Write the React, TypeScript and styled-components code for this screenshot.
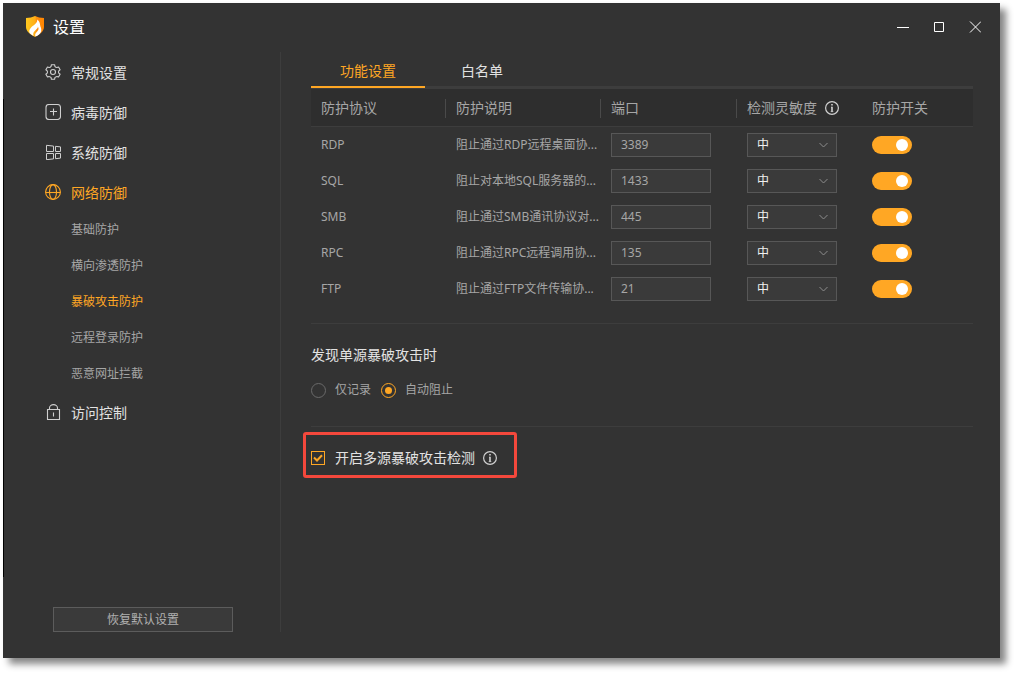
import React from "react";
import styled, { createGlobalStyle } from "styled-components";

const accent = "#ffa724";

const GlobalStyle = createGlobalStyle`
  *, *::before, *::after { box-sizing: border-box; }
  body {
    margin: 0;
    background: #fff;
    font-family: "Noto Sans", "Noto Sans CJK SC", sans-serif;
    font-size: 12px;
    line-height: 20px;
    color: #a6a6a6;
  }
  button, input, select { font: inherit; color: inherit; margin: 0; }
`;

const Frame = styled.div`
  display: flex;
  min-height: 100vh;
  padding: 3px 16px 16px 3px;
`;

const Window = styled.div`
  flex: 1;
  min-width: 0;
  display: flex;
  flex-direction: column;
  padding-bottom: 26px;
  background: #333;
  box-shadow: 6px 6px 7px rgba(0, 0, 0, 0.48);
  position: relative;

  &::before {
    content: "";
    position: absolute;
    left: 0;
    top: 96px;
    bottom: 81px;
    width: 1px;
    background: #000;
  }
`;

const TitleBar = styled.header`
  display: flex;
  align-items: center;
  height: 49px;
  padding: 0 17px 2px 23px;
`;

const Title = styled.h1`
  flex: 1;
  margin: 0 0 0 9px;
  font-size: 16px;
  font-weight: 400;
  line-height: 24px;
  color: #fff;
`;

const WindowButtons = styled.div`
  display: flex;
  gap: 20px;
`;

const WindowButton = styled.button`
  display: flex;
  align-items: center;
  justify-content: center;
  width: 16px;
  height: 16px;
  padding: 0;
  border: 0;
  background: none;
  color: #fff;
`;

const Body = styled.div`
  flex: 1;
  display: flex;
`;

const Sidebar = styled.aside`
  flex: none;
  width: 278px;
  display: flex;
  flex-direction: column;
  justify-content: space-between;
  padding-left: 42px;
  border-right: 1px solid #3d3d3d;
`;

const NavList = styled.ul`
  list-style: none;
  margin: 0;
  padding: 0;
`;

const NavLink = styled.a<{ $active?: boolean }>`
  display: flex;
  align-items: center;
  gap: 10px;
  height: 40px;
  font-size: 14px;
  color: ${(p) => (p.$active ? accent : "#cfcfcf")};
  text-decoration: none;
`;

const NavText = styled.span<{ $active?: boolean }>`
  padding-top: 2px;
  color: ${(p) => (p.$active ? accent : "#e2e2e2")};
`;

const SubLink = styled.a<{ $active?: boolean }>`
  display: flex;
  align-items: center;
  height: 36px;
  padding-left: 26px;
  color: ${(p) => (p.$active ? accent : "#a6a6a6")};
  text-decoration: none;
`;

const ResetButton = styled.button`
  width: 180px;
  height: 25px;
  margin-left: 8px;
  padding: 0;
  border: 1px solid #5c5c5c;
  background: #3a3a3a;
  color: #b0b0b0;
`;

const Main = styled.main`
  flex: 1;
  min-width: 0;
  padding: 0 27px 0 30px;
`;

const Tabs = styled.div`
  display: flex;
  height: 37px;
  border-bottom: 3px solid #3d3d3d;
`;

const Tab = styled.button<{ $active?: boolean }>`
  width: 114px;
  height: 36px;
  padding: 4px 0 0;
  border: 0;
  border-bottom: 2px solid ${(p) => (p.$active ? accent : "transparent")};
  background: none;
  font-size: 14px;
  color: ${(p) => (p.$active ? accent : "#e2e2e2")};
`;

const Table = styled.table`
  width: 100%;
  table-layout: fixed;
  border-collapse: collapse;
`;

const Col = styled.col<{ $width?: number }>`
  width: ${(p) => (p.$width ? `${p.$width}px` : "auto")};
`;

const HeadRow = styled.tr`
  height: 38px;
  background: #2e2e2e;
  box-shadow: inset 0 -1px #3d3d3d;
`;

const HeadCell = styled.th`
  padding: 0;
  text-align: left;
  font-size: 14px;
  font-weight: 400;
`;

const HeadLabel = styled.div<{ $divided?: boolean }>`
  display: flex;
  align-items: center;
  gap: 8px;
  height: 19px;
  padding-left: 10px;
  border-right: 1px solid ${(p) => (p.$divided ? "#4a4a4a" : "transparent")};
  white-space: nowrap;
`;

const Row = styled.tr`
  height: 36px;
`;

const Cell = styled.td`
  padding: 0 0 0 10px;
  white-space: nowrap;
  overflow: hidden;
`;

const PortInput = styled.input`
  display: block;
  width: 100px;
  height: 24px;
  padding: 0 9px 2px;
  border: 1px solid #575757;
  border-radius: 0;
  background: #3a3a3a;
`;

const SelectBox = styled.div`
  display: grid;
  align-items: center;
  width: 90px;

  & > * { grid-area: 1 / 1; }
  & > svg { justify-self: end; margin-right: 9px; pointer-events: none; }
`;

const LevelSelect = styled.select`
  appearance: none;
  width: 100%;
  height: 24px;
  padding: 0 9px;
  border: 1px solid #575757;
  border-radius: 0;
  background: #3a3a3a;
  color: #f0f0f0;
`;

const Switch = styled.input`
  appearance: none;
  display: flex;
  align-items: center;
  width: 40px;
  height: 18px;
  padding: 0 4px;
  border-radius: 9px;
  background: #555;

  &::before {
    content: "";
    width: 12px;
    height: 12px;
    border-radius: 50%;
    background: #fff;
  }
  &:checked { background: ${accent}; justify-content: flex-end; }
`;

const Section = styled.fieldset`
  margin: 16px 0 0;
  padding: 21px 0 26px;
  border: 0;
  border-top: 1px solid #3d3d3d;
  border-bottom: 1px solid #3d3d3d;
`;

const SectionTitle = styled.legend`
  float: left;
  width: 100%;
  padding: 0;
  font-size: 14px;
  color: #e2e2e2;
`;

const Options = styled.div`
  clear: both;
  display: flex;
  gap: 10px;
  padding-top: 15px;
`;

const Option = styled.label`
  display: flex;
  align-items: center;
  gap: 9px;
`;

const Radio = styled.input`
  appearance: none;
  display: flex;
  align-items: center;
  justify-content: center;
  width: 15px;
  height: 15px;
  border: 1px solid #6a6a6a;
  border-radius: 50%;

  &:checked { border-color: ${accent}; }
  &:checked::before {
    content: "";
    width: 7px;
    height: 7px;
    border-radius: 50%;
    background: ${accent};
  }
`;

const Highlight = styled.div`
  display: flex;
  align-items: center;
  gap: 8px;
  width: fit-content;
  height: 46px;
  margin: 5px 0 0 -8px;
  padding: 6px 17px 0 5px;
  border: 3px solid #f4483c;
  border-radius: 3px;
`;

const CheckLabel = styled.label`
  display: flex;
  align-items: center;
  gap: 10px;
  font-size: 14px;
  color: #e2e2e2;
`;

const CheckBox = styled.span`
  display: grid;
  place-items: center;
  color: ${accent};

  & > * { grid-area: 1 / 1; }
  & > svg { pointer-events: none; visibility: hidden; }
  & > input:checked + svg { visibility: visible; }
`;

const Check = styled.input`
  appearance: none;
  width: 14px;
  height: 14px;
  border: 1px solid ${accent};
`;

const Logo = () => (
  <svg width="18" height="21" viewBox="0 0 18 21" aria-hidden="true">
    <defs>
      <linearGradient id="shield" x1="0" y1="0" x2="1" y2="0">
        <stop offset="0" stopColor="#ffc91f" />
        <stop offset="0.5" stopColor="#ffae17" />
        <stop offset="0.6" stopColor="#ff8c0d" />
        <stop offset="1" stopColor="#ff8500" />
      </linearGradient>
    </defs>
    <path d="M9 0C6.500 1.300 3.400 2 0 2v9c0 4.300 4.500 7.800 9 10 4.500-2.200 9-5.700 9-10V2C14.600 2 11.500 1.300 9 0z" fill="url(#shield)" />
    <path d="M11.200 3.400c.3 3-1.800 4.300-4.200 6.400-2.700 2.300-4.900 4.800-3 7.800 1 .9 2.300 1.800 3.500 2.400-.9-2.900.4-4.400 2.200-6 1.400-1.300 2.300-2.100 2.200-3.500 1.500 2.300.2 4.300-1.400 5.800-1.300 1.300-1.700 2.600-1 4.200 2.500-1 5.100-2.600 5.700-5.300.6-2.700-.9-4.300-1.100-6.200-.2-2-.8-4.100-2.900-5.600z" fill="#fff" />
  </svg>
);

const GearIcon = () => (
  <svg width="16" height="16" viewBox="0 0 16 16" fill="none" stroke="currentColor" strokeWidth="1.100" strokeLinejoin="round" aria-hidden="true">
    <path d="M6.400.7H9.600L9.900 2.400Q10.700 3.500 11.900 3.550L13.520 2.960L15.120 5.740L13.800 6.850Q13.200 8 13.800 9.150L15.120 10.260L13.520 13.040L11.900 12.450Q10.700 12.500 9.900 13.600L9.600 15.300H6.400L6.100 13.600Q5.300 12.500 4.100 12.450L2.480 13.040L.88 10.260L2.200 9.150Q2.800 8 2.200 6.850L.88 5.740L2.480 2.960L4.100 3.550Q5.300 3.500 6.100 2.400z" />
    <circle cx="8" cy="8" r="2.500" />
  </svg>
);

const PlusBoxIcon = () => (
  <svg width="16" height="16" viewBox="0 0 16 16" fill="none" stroke="currentColor" strokeWidth="1.100" aria-hidden="true">
    <rect x="1" y="0.500" width="14.500" height="15" rx="3" />
    <path d="M8.500 4.500v7M5 7.500h7" />
  </svg>
);

const PanesIcon = () => (
  <svg width="16" height="16" viewBox="0 0 16 16" fill="none" stroke="currentColor" aria-hidden="true">
    <path d="M1.500 1.300l7 .8v5.400h-7zM10.500 2.300l5 .6v4.600h-5zM1.500 9.500h7v5.400l-7 .8zM10.500 9.500h5v4.600l-5 .6z" />
  </svg>
);

const GlobeIcon = () => (
  <svg width="16" height="16" viewBox="0 0 16 16" fill="none" stroke="currentColor" strokeWidth="1.100" aria-hidden="true">
    <circle cx="8" cy="8" r="7.400" />
    <ellipse cx="8" cy="8" rx="3.500" ry="7.400" />
    <path d="M.6 8.500h14.800" />
  </svg>
);

const LockIcon = () => (
  <svg width="16" height="16" viewBox="0 0 16 16" fill="none" stroke="currentColor" strokeWidth="1.100" aria-hidden="true">
    <path d="M2.500 5.500h12v10h-12zM4.500 5.500V4a4 3.400 0 0 1 8 0v1.500M8.500 8.500v4" />
  </svg>
);

const InfoIcon = () => (
  <svg width="14" height="14" viewBox="0 0 14 14" fill="none" stroke="#d0d0d0" aria-hidden="true">
    <circle cx="7" cy="7" r="6.400" strokeWidth="1.200" />
    <path d="M7 3v1.600M7 5.800v5" strokeWidth="1.600" />
    <path d="M6 6.300h1M5.700 10.600h2.600" strokeWidth="0.800" />
  </svg>
);

const Chevron = () => (
  <svg width="9" height="6" viewBox="0 0 9 6" fill="none" stroke="#8c8c8c" aria-hidden="true">
    <path d="M.5 1l4 4 4-4" />
  </svg>
);

const subItems = ["基础防护", "横向渗透防护", "暴破攻击防护", "远程登录防护", "恶意网址拦截"];

const rules = [
  { name: "RDP", text: "阻止通过RDP远程桌面协...", port: "3389" },
  { name: "SQL", text: "阻止对本地SQL服务器的...", port: "1433" },
  { name: "SMB", text: "阻止通过SMB通讯协议对...", port: "445" },
  { name: "RPC", text: "阻止通过RPC远程调用协...", port: "135" },
  { name: "FTP", text: "阻止通过FTP文件传输协...", port: "21" },
];

export default function App() {
  return (
    <Frame>
      <GlobalStyle />
      <Window>
        <TitleBar>
          <Logo />
          <Title>设置</Title>
          <WindowButtons>
            <WindowButton aria-label="最小化">
              <svg width="12" height="12" viewBox="0 0 12 12" stroke="currentColor"><path d="M0 6.500h12" /></svg>
            </WindowButton>
            <WindowButton aria-label="最大化">
              <svg width="10" height="10" viewBox="0 0 10 10" fill="none" stroke="currentColor"><path d="M.5.5h9v9h-9z" /></svg>
            </WindowButton>
            <WindowButton aria-label="关闭">
              <svg width="12" height="12" viewBox="0 0 12 12" stroke="currentColor"><path d="M1 .5l11 11M12 .5l-11 11" /></svg>
            </WindowButton>
          </WindowButtons>
        </TitleBar>
        <Body>
          <Sidebar>
            <nav>
              <NavList>
                <li><NavLink href="#general"><GearIcon /><NavText>常规设置</NavText></NavLink></li>
                <li><NavLink href="#virus"><PlusBoxIcon /><NavText>病毒防御</NavText></NavLink></li>
                <li><NavLink href="#system"><PanesIcon /><NavText>系统防御</NavText></NavLink></li>
                <li>
                  <NavLink href="#network" $active><GlobeIcon /><NavText $active>网络防御</NavText></NavLink>
                  <NavList>
                    {subItems.map((label, i) => (
                      <li key={label}>
                        <SubLink href={`#network-${i}`} $active={i === 2}>{label}</SubLink>
                      </li>
                    ))}
                  </NavList>
                </li>
                <li><NavLink href="#access"><LockIcon /><NavText>访问控制</NavText></NavLink></li>
              </NavList>
            </nav>
            <ResetButton>恢复默认设置</ResetButton>
          </Sidebar>
          <Main>
            <Tabs role="tablist">
              <Tab role="tab" aria-selected="true" $active>功能设置</Tab>
              <Tab role="tab" aria-selected="false">白名单</Tab>
            </Tabs>
            <Table>
              <colgroup>
                <Col $width={135} />
                <Col />
                <Col $width={136} />
                <Col $width={125} />
                <Col $width={111} />
              </colgroup>
              <thead>
                <HeadRow>
                  <HeadCell><HeadLabel $divided>防护协议</HeadLabel></HeadCell>
                  <HeadCell><HeadLabel $divided>防护说明</HeadLabel></HeadCell>
                  <HeadCell><HeadLabel $divided>端口</HeadLabel></HeadCell>
                  <HeadCell><HeadLabel>检测灵敏度<InfoIcon /></HeadLabel></HeadCell>
                  <HeadCell><HeadLabel>防护开关</HeadLabel></HeadCell>
                </HeadRow>
              </thead>
              <tbody>
                {rules.map((rule) => (
                  <Row key={rule.name}>
                    <Cell>{rule.name}</Cell>
                    <Cell>{rule.text}</Cell>
                    <Cell><PortInput aria-label={`${rule.name} 端口`} defaultValue={rule.port} /></Cell>
                    <Cell>
                      <SelectBox>
                        <LevelSelect aria-label={`${rule.name} 检测灵敏度`}>
                          <option>中</option>
                        </LevelSelect>
                        <Chevron />
                      </SelectBox>
                    </Cell>
                    <Cell><Switch type="checkbox" role="switch" aria-label={`${rule.name} 防护开关`} defaultChecked /></Cell>
                  </Row>
                ))}
              </tbody>
            </Table>
            <Section>
              <SectionTitle>发现单源暴破攻击时</SectionTitle>
              <Options>
                <Option><Radio type="radio" name="action" />仅记录</Option>
                <Option><Radio type="radio" name="action" defaultChecked />自动阻止</Option>
              </Options>
            </Section>
            <Highlight>
              <CheckLabel>
                <CheckBox>
                  <Check type="checkbox" defaultChecked />
                  <svg width="10" height="8" viewBox="0 0 10 8" fill="none" stroke="currentColor" strokeWidth="2" aria-hidden="true">
                    <path d="M1 3.500l3 3L9 1.200" />
                  </svg>
                </CheckBox>
                开启多源暴破攻击检测
              </CheckLabel>
              <InfoIcon />
            </Highlight>
          </Main>
        </Body>
      </Window>
    </Frame>
  );
}
